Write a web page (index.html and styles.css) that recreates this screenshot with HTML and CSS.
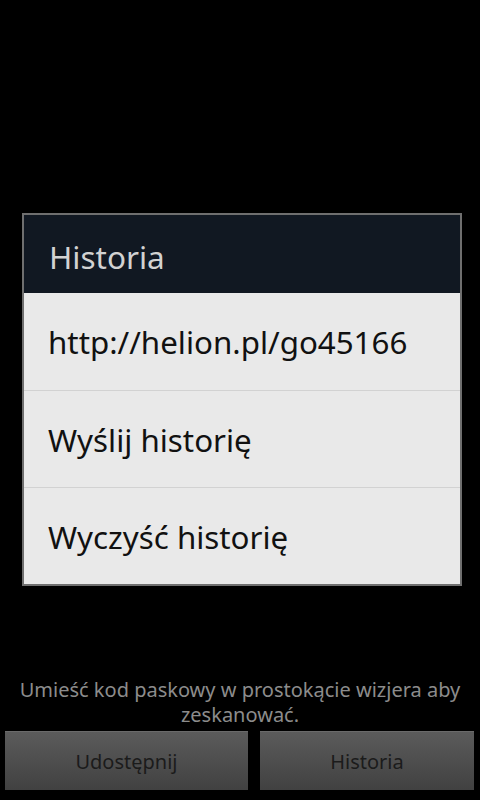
FILE: index.html
```html
<!DOCTYPE html>
<html lang="pl">
<head>
    <meta charset="UTF-8">
    <meta name="viewport" content="width=device-width, initial-scale=1.0">
    <title>Historia</title>
    <link rel="stylesheet" href="styles.css">
</head>
<body>
    <div class="screen">
        <div class="dialog">
            <div class="dialog-title">Historia</div>
            <ul class="dialog-list">
                <li>http://helion.pl/go45166</li>
                <li>Wyślij historię</li>
                <li>Wyczyść historię</li>
            </ul>
        </div>

        <div class="footer">
            <p class="hint">Umieść kod paskowy w prostokącie wizjera aby zeskanować.</p>
            <div class="buttons">
                <button class="btn btn-left">Udostępnij</button>
                <button class="btn btn-right">Historia</button>
            </div>
        </div>
    </div>
</body>
</html>
```

FILE: styles.css
```css
body {
    margin: 0;
    padding: 0;
    background-color: #000;
    font-family: "Noto Sans", "Open Sans", sans-serif;
}
.screen {
    display: flex;
    flex-direction: column;
    height: 800px;
}
.dialog {
    margin: 213px 18px 0 22px;
    border: 2px solid #6f6f6f;
    background-color: #e9e9e9;
}
.dialog-title {
    background-color: #111822;
    color: #d2d2d2;
    font-size: 31.5px;
    height: 78px;
    line-height: 84px;
    padding-left: 25px;
}
.dialog-list {
    list-style: none;
    margin: 0;
    padding: 0;
}
.dialog-list li {
    height: 96px;
    line-height: 98px;
    padding-left: 24px;
    font-size: 31.3px;
    color: #111;
    border-top: 1px solid #d2d2d2;
}
.dialog-list li:first-child {
    border-top: none;
    height: 97px;
}
.footer {
    margin-top: auto;
    padding-bottom: 10px;
}
.hint {
    margin: 0 10px 4px;
    text-align: center;
    color: #8c8c8c;
    font-size: 20px;
    line-height: 25px;
}
.buttons {
    display: flex;
    padding: 0 6px 0 5px;
    gap: 12px;
}
.btn {
    height: 59px;
    border: none;
    border-top: 1px solid #6a6a6a;
    background: linear-gradient(#5b5b5b, #414141);
    color: #1b1b1b;
    font-family: "Noto Sans", "Open Sans", sans-serif;
    font-size: 20px;
    padding: 0;
}
.btn-left {
    width: 243px;
}
.btn-right {
    width: 214px;
}
```
